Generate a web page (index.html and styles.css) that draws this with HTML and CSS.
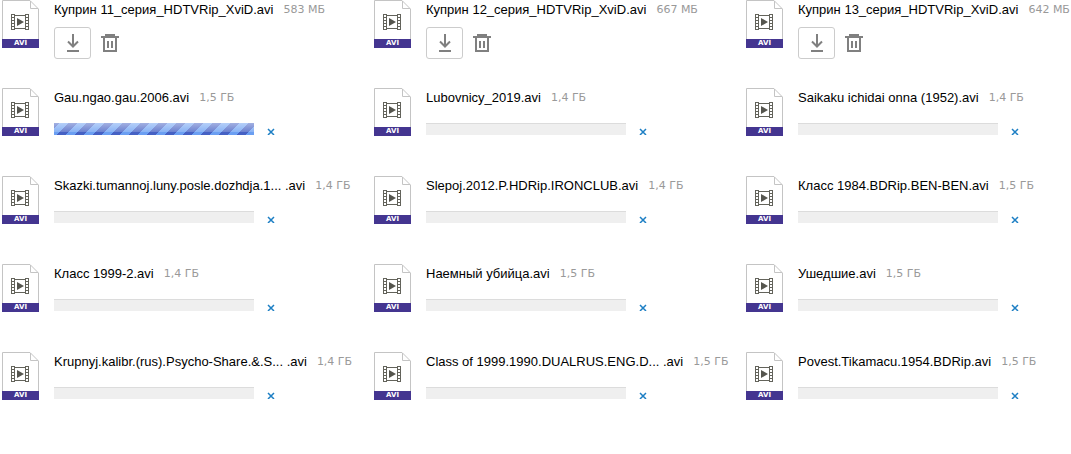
FILE: index.html
```html
<!DOCTYPE html>
<html lang="ru">
<head>
  <meta charset="UTF-8" />
  <meta name="viewport" content="width=device-width, initial-scale=1.0"/>
  <title>Файлы</title>
  <link rel="stylesheet" href="styles.css">
</head>
<body>
  <svg class="sprite" aria-hidden="true">
    <symbol id="paper" viewBox="0 0 37 39">
      <path d="M.5 39V.5H28L36.500 9V39" fill="#fff" stroke="#c4c4c4"/>
      <path d="M28.500 1V8.500H36" fill="none" stroke="#c4c4c4"/>
      <path d="M9 14h4v1h10v-1h4v16h-4v-1h-10v1h-4zM13 16v12h10v-12z" fill="#63635b" fill-rule="evenodd"/>
      <path d="M10 15h2v2h-2zM10 18h2v2h-2zM10 21h2v2h-2zM10 24h2v2h-2zM10 27h2v2h-2zM24 15h2v2h-2zM24 18h2v2h-2zM24 21h2v2h-2zM24 24h2v2h-2zM24 27h2v2h-2z" fill="#fff"/>
      <path d="M15 18L22 22L15 26z" fill="#55554e"/>
    </symbol>
    <symbol id="download" viewBox="0 0 15 20">
      <path d="M8 1v13M3 8.500L8 13.500L13 8.500M2 18h12" fill="none" stroke="#808080" stroke-width="2"/>
    </symbol>
    <symbol id="trash" viewBox="0 0 18 20">
      <path d="M0 4h18M5 4V2h8v2M3 5v13h12V5M7 8v7M11 8v7" fill="none" stroke="#808080" stroke-width="2"/>
    </symbol>
    <symbol id="cross" viewBox="0 0 8 8">
      <path d="M1 2L7 8M7 2L1 8" fill="none" stroke="#1d7fc4" stroke-width="1.500"/>
    </symbol>
  </svg>

  <main class="files" id="files"></main>

  <script src="files.js"></script>
</body>
</html>
```
FILE: styles.css
```css
body {
  margin: 0;
  background-color: #fff;
  font-family: "Liberation Sans", Arial, sans-serif;
  font-size: 13px;
  color: #000;
}

.sprite {
  display: none;
}

.files {
  display: grid;
  grid-template-columns: repeat(3, 1fr);
  column-gap: 47px;
  row-gap: 28px;
  padding-left: 2px;
}

.file {
  display: flex;
  gap: 15px;
  min-width: 0;
  height: 60px;
}

.icon {
  flex: none;
  width: 37px;
}

.icon svg {
  display: block;
  width: 37px;
  height: 39px;
}

.ext {
  display: block;
  height: 9px;
  background-color: #443590;
  color: #fff;
  font: bold 7px/9px "DejaVu Sans", Verdana, sans-serif;
  text-align: center;
}

.title {
  display: flex;
  gap: 10px;
  height: 20px;
  line-height: 20px;
  white-space: nowrap;
}

.size {
  font-family: "DejaVu Sans", Verdana, sans-serif;
  font-size: 11px;
  color: #999;
}

.actions {
  display: flex;
  align-items: center;
  gap: 10px;
  margin-top: 7px;
}

button {
  display: flex;
  align-items: center;
  justify-content: center;
  padding: 0;
  border: none;
  background: none;
  cursor: pointer;
}

.download {
  box-sizing: border-box;
  width: 37px;
  height: 32px;
  border: 1px solid #ccc;
  border-radius: 3px;
}

.download:hover {
  border-color: #999;
}

.download svg {
  width: 15px;
  height: 20px;
}

.trash svg {
  width: 18px;
  height: 20px;
}

.upload {
  display: flex;
  align-items: flex-end;
  gap: 13px;
  margin-top: 15px;
}

.cancel svg {
  width: 8px;
  height: 8px;
  overflow: visible;
}

progress {
  display: block;
  width: 200px;
  height: 12px;
  border: none;
  -webkit-appearance: none;
  appearance: none;
}

progress::-webkit-progress-bar {
  background-color: #efefef;
  box-shadow: inset 0 1px 0 #dcdcdc;
}

progress::-webkit-progress-value {
  background:
    linear-gradient(rgba(255,255,255,0.5), rgba(255,255,255,0.2) 75%, rgba(255,255,255,0) 75%),
    linear-gradient(135deg, #6b9ff2 25%, #4561c4 25%, #4561c4 50%, #6b9ff2 50%, #6b9ff2 75%, #4561c4 75%) 5px 0 / 18px 18px;
}
```
FILE: files.js
```javascript
// done - файл загружен, progress - процент загрузки
const files = [
  { name: 'Куприн 11_серия_HDTVRip_XviD.avi', size: '583 МБ', done: true },
  { name: 'Куприн 12_серия_HDTVRip_XviD.avi', size: '667 МБ', done: true },
  { name: 'Куприн 13_серия_HDTVRip_XviD.avi', size: '642 МБ', done: true },
  { name: 'Gau.ngao.gau.2006.avi', size: '1,5 ГБ', progress: 100 },
  { name: 'Lubovnicy_2019.avi', size: '1,4 ГБ', progress: 0 },
  { name: 'Saikaku ichidai onna (1952).avi', size: '1,4 ГБ', progress: 0 },
  { name: 'Skazki.tumannoj.luny.posle.dozhdja.1... .avi', size: '1,4 ГБ', progress: 0 },
  { name: 'Slepoj.2012.P.HDRip.IRONCLUB.avi', size: '1,4 ГБ', progress: 0 },
  { name: 'Класс 1984.BDRip.BEN-BEN.avi', size: '1,5 ГБ', progress: 0 },
  { name: 'Класс 1999-2.avi', size: '1,4 ГБ', progress: 0 },
  { name: 'Наемный убийца.avi', size: '1,5 ГБ', progress: 0 },
  { name: 'Ушедшие.avi', size: '1,5 ГБ', progress: 0 },
  { name: 'Krupnyj.kalibr.(rus).Psycho-Share.&amp;.S... .avi', size: '1,4 ГБ', progress: 0 },
  { name: 'Class of 1999.1990.DUALRUS.ENG.D... .avi', size: '1,5 ГБ', progress: 0 },
  { name: 'Povest.Tikamacu.1954.BDRip.avi', size: '1,5 ГБ', progress: 0 }
];

function controls(file) {
  if (file.done) {
    return `<div class="actions">
      <button class="download" aria-label="Скачать"><svg><use href="#download"/></svg></button>
      <button class="trash" aria-label="Удалить"><svg><use href="#trash"/></svg></button>
    </div>`;
  }
  return `<div class="upload">
    <progress max="100" value="${file.progress}" aria-label="${file.name}"></progress>
    <button class="cancel" aria-label="Отменить"><svg><use href="#cross"/></svg></button>
  </div>`;
}

document.getElementById('files').innerHTML = files.map(file => `
  <div class="file">
    <div class="icon"><svg><use href="#paper"/></svg><span class="ext">AVI</span></div>
    <div class="info">
      <div class="title"><span>${file.name}</span><span class="size">${file.size}</span></div>
      ${controls(file)}
    </div>
  </div>`).join('');
```
